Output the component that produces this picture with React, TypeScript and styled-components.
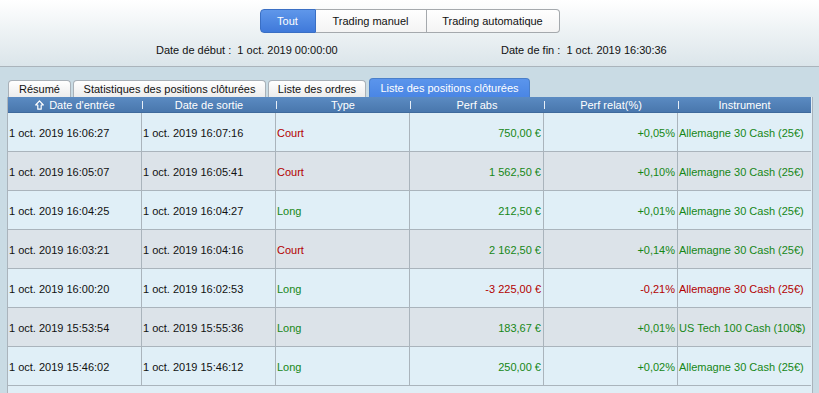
import React from 'react';
import styled, { createGlobalStyle } from 'styled-components';

const GlobalStyle = createGlobalStyle`
  html, body {
    margin: 0;
    padding: 0;
    background: #c9dbe4;
    font-family: "Liberation Sans", Arial, sans-serif;
    font-size: 11px;
    color: #111;
  }
`;

const Page = styled.div`
  width: 819px;
  height: 393px;
  overflow: hidden;
  background: #c9dbe4;
`;

const TopBar = styled.div`
  height: 67px;
  box-sizing: border-box;
  padding-top: 9px;
  background: linear-gradient(to bottom, #ffffff 0%, #eef3f5 45%, #dbe5ea 100%);
  border-bottom: 1px solid #aab4bb;
`;

const Segmented = styled.div`
  display: flex;
  justify-content: center;
`;

const SegButton = styled.div<{ $active?: boolean; $w: number; $pos: 'first' | 'mid' | 'last' }>`
  width: ${(p) => p.$w}px;
  height: 24px;
  box-sizing: border-box;
  display: flex;
  align-items: center;
  justify-content: center;
  font-size: 11px;
  color: ${(p) => (p.$active ? '#fff' : '#111')};
  background: ${(p) =>
    p.$active ? 'linear-gradient(to bottom, #5f97ea, #3f79da)' : 'linear-gradient(to bottom, #ffffff, #f4f4f4)'};
  border: 1px solid ${(p) => (p.$active ? '#3a6fc4' : '#a5a9ad')};
  border-left-width: ${(p) => (p.$pos === 'first' ? 1 : 0)}px;
  border-radius: ${(p) => (p.$pos === 'first' ? '4px 0 0 4px' : p.$pos === 'last' ? '0 4px 4px 0' : '0')};
`;

const DateRow = styled.div`
  display: flex;
  padding: 11px 0 0 156px;
  font-size: 11px;
  line-height: 13px;
`;

const DateItem = styled.span<{ $w?: number }>`
  width: ${(p) => (p.$w ? `${p.$w}px` : 'auto')};
  white-space: pre;
`;

const Body = styled.div`
  padding: 11px 0 0 7px;
`;

const TabRow = styled.div`
  display: flex;
  align-items: flex-end;
  gap: 2px;
  padding-left: 1px;
  height: 19px;
`;

const Tab = styled.div<{ $active?: boolean; $w: number }>`
  width: ${(p) => p.$w}px;
  height: ${(p) => (p.$active ? 19 : 17)}px;
  box-sizing: border-box;
  display: flex;
  align-items: center;
  justify-content: center;
  font-size: 11px;
  color: ${(p) => (p.$active ? '#fff' : '#111')};
  background: ${(p) =>
    p.$active ? 'linear-gradient(to bottom, #5b95ec, #4a86e4)' : 'linear-gradient(to bottom, #ffffff, #ececec)'};
  border: 1px solid ${(p) => (p.$active ? '#4a7fc9' : '#a9b1b8')};
  border-bottom: none;
  border-radius: 4px 4px 0 0;
  margin-left: ${(p) => (p.$active ? 1 : 0)}px;
`;

const Table = styled.div`
  width: 804px;
  border-left: 1px solid #aab4bc;
  border-right: 1px solid #aab4bc;
  background: #e0eef6;
  height: 300px;
`;

const Grid = styled.div`
  display: grid;
  grid-template-columns: 134px 134px 134px 134px 134px 133px;
`;

const HeadCell = styled.div<{ $sep?: boolean }>`
  position: relative;
  height: 15px;
  display: flex;
  align-items: center;
  justify-content: center;
  gap: 5px;
  color: #fff;
  font-size: 11px;
  background: linear-gradient(to bottom, #5b8bc2, #4977ad);
  border-bottom: 1px solid #3f6a9c;
  &::before {
    content: '';
    display: ${(p) => (p.$sep ? 'block' : 'none')};
    position: absolute;
    left: 0;
    top: 4px;
    width: 1px;
    height: 8px;
    background: #e6eef7;
  }
`;

const Cell = styled.div<{ $alt?: boolean; $right?: boolean; $color?: string; $last?: boolean }>`
  height: 39px;
  box-sizing: border-box;
  display: flex;
  align-items: center;
  justify-content: ${(p) => (p.$right ? 'flex-end' : 'flex-start')};
  padding: 1px ${(p) => (p.$right ? 2 : 0)}px 0 ${(p) => (p.$right ? 0 : 1)}px;
  background: ${(p) => (p.$alt ? '#dce3e9' : '#e0eff7')};
  border-right: ${(p) => (p.$last ? 'none' : '1px solid #aab4bc')};
  border-bottom: 1px solid #aab4bc;
  color: ${(p) => p.$color || '#111'};
  font-size: 11px;
  white-space: nowrap;
`;

const GREEN = '#168716';
const RED = '#b30000';

const SortArrow = () => (
  <svg width="9" height="10" viewBox="0 0 9 10">
    <path d="M4.5 0.8 L8.3 5 H6.2 V9.2 H2.8 V5 H0.7 Z" fill="none" stroke="#fff" strokeWidth="1.2" strokeLinejoin="round" />
  </svg>
);

type Row = {
  entry: string;
  exit: string;
  type: 'Court' | 'Long';
  abs: string;
  rel: string;
  instrument: string;
};

const rows: Row[] = [
  { entry: '1 oct. 2019 16:06:27', exit: '1 oct. 2019 16:07:16', type: 'Court', abs: '750,00 €', rel: '+0,05%', instrument: 'Allemagne 30 Cash (25€)' },
  { entry: '1 oct. 2019 16:05:07', exit: '1 oct. 2019 16:05:41', type: 'Court', abs: '1 562,50 €', rel: '+0,10%', instrument: 'Allemagne 30 Cash (25€)' },
  { entry: '1 oct. 2019 16:04:25', exit: '1 oct. 2019 16:04:27', type: 'Long', abs: '212,50 €', rel: '+0,01%', instrument: 'Allemagne 30 Cash (25€)' },
  { entry: '1 oct. 2019 16:03:21', exit: '1 oct. 2019 16:04:16', type: 'Court', abs: '2 162,50 €', rel: '+0,14%', instrument: 'Allemagne 30 Cash (25€)' },
  { entry: '1 oct. 2019 16:00:20', exit: '1 oct. 2019 16:02:53', type: 'Long', abs: '-3 225,00 €', rel: '-0,21%', instrument: 'Allemagne 30 Cash (25€)' },
  { entry: '1 oct. 2019 15:53:54', exit: '1 oct. 2019 15:55:36', type: 'Long', abs: '183,67 €', rel: '+0,01%', instrument: 'US Tech 100 Cash (100$)' },
  { entry: '1 oct. 2019 15:46:02', exit: '1 oct. 2019 15:46:12', type: 'Long', abs: '250,00 €', rel: '+0,02%', instrument: 'Allemagne 30 Cash (25€)' },
];

export default function App() {
  return (
    <Page>
      <GlobalStyle />
      <TopBar>
        <Segmented>
          <SegButton $active $w={56} $pos="first">Tout</SegButton>
          <SegButton $w={111} $pos="mid">Trading manuel</SegButton>
          <SegButton $w={133} $pos="last">Trading automatique</SegButton>
        </Segmented>
        <DateRow>
          <DateItem $w={345}>Date de début :  1 oct. 2019 00:00:00</DateItem>
          <DateItem>Date de fin :  1 oct. 2019 16:30:36</DateItem>
        </DateRow>
      </TopBar>
      <Body>
        <TabRow>
          <Tab $w={63}>Résumé</Tab>
          <Tab $w={193}>Statistiques des positions clôturées</Tab>
          <Tab $w={98}>Liste des ordres</Tab>
          <Tab $active $w={161}>Liste des positions clôturées</Tab>
        </TabRow>
        <Table>
          <Grid>
            <HeadCell>
              <SortArrow />
              Date d'entrée
            </HeadCell>
            <HeadCell $sep>Date de sortie</HeadCell>
            <HeadCell $sep>Type</HeadCell>
            <HeadCell $sep>Perf abs</HeadCell>
            <HeadCell $sep>Perf relat(%)</HeadCell>
            <HeadCell $sep>Instrument</HeadCell>
            {rows.map((r, i) => {
              const alt = i % 2 === 1;
              const color = r.abs.startsWith('-') ? RED : GREEN;
              return (
                <React.Fragment key={i}>
                  <Cell $alt={alt}>{r.entry}</Cell>
                  <Cell $alt={alt}>{r.exit}</Cell>
                  <Cell $alt={alt} $color={r.type === 'Court' ? RED : GREEN}>{r.type}</Cell>
                  <Cell $alt={alt} $right $color={color}>{r.abs}</Cell>
                  <Cell $alt={alt} $right $color={color}>{r.rel}</Cell>
                  <Cell $alt={alt} $last $color={color}>{r.instrument}</Cell>
                </React.Fragment>
              );
            })}
          </Grid>
        </Table>
      </Body>
    </Page>
  );
}
